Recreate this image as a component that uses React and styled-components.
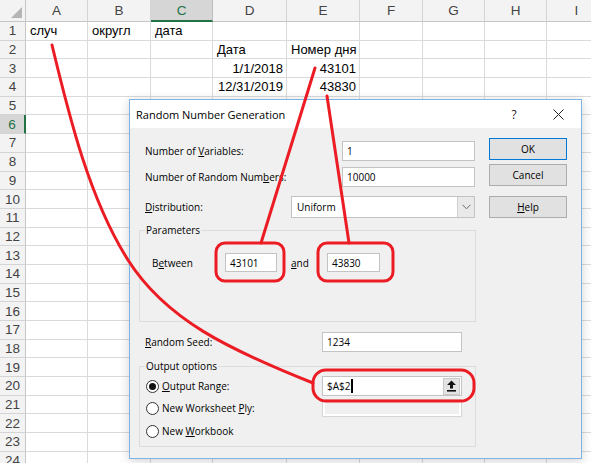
import React from 'react'
import styled, { createGlobalStyle } from 'styled-components'

const GlobalStyle = createGlobalStyle`
html, body {
  margin: 0;
  padding: 0;
  background: #fff;
}
body {
  width: 591px;
  height: 463px;
  overflow: hidden;
}
* {
  box-sizing: border-box;
}
`

const columns = ['A', 'B', 'C', 'D', 'E', 'F', 'G', 'H', 'I']

const cells = {
  1: { A: 'случ', B: 'округл', C: 'дата' },
  2: { D: 'Дата', E: 'Номер дня' },
  3: { D: ['1/1/2018', 'right'], E: ['43101', 'right'] },
  4: { D: ['12/31/2019', 'right'], E: ['43830', 'right'] },
}

const UpArrowIcon = () => (
  <svg width="11" height="12" viewBox="0 0 11 12">
    <path d="M5.5 0.5 L10 5 L7 5 L7 8.5 L4 8.5 L4 5 L1 5 Z" fill="#111" />
    <rect x="1" y="10" width="9" height="1.6" fill="#111" />
  </svg>
)

const ChevronIcon = () => (
  <svg width="9" height="6" viewBox="0 0 9 6">
    <path d="M0.5 0.8 L4.5 4.8 L8.5 0.8" fill="none" stroke="#6b6b6b" strokeWidth="1" />
  </svg>
)

const CloseIcon = () => (
  <svg width="11" height="11" viewBox="0 0 11 11">
    <path d="M0.5 0.5 L10.5 10.5 M10.5 0.5 L0.5 10.5" stroke="#222" strokeWidth="1" />
  </svg>
)

const Annotations = () => (
  <Overlay width="591" height="463" viewBox="0 0 591 463">
    <g fill="none" stroke="#ec1c24" strokeWidth="3" strokeLinecap="round">
      <path d="M52 45 C70 120 90 200 128 260 S230 350 313 383" />
      <path d="M315 68 L261 243" />
      <path d="M327 96 L349 243" />
      <rect x="216" y="243" width="68" height="38" rx="9" />
      <rect x="318" y="243" width="75" height="38" rx="9" />
      <rect x="313" y="370" width="161" height="31" rx="13" />
    </g>
  </Overlay>
)

const App = () => {
  const rows = Array.from({ length: 25 }, (_, i) => i + 1)
  return (
    <Screen>
      <GlobalStyle />
      <Sheet>
        <Corner>
          <CornerMark />
        </Corner>
        {columns.map((c) => (
          <ColHead key={c} selected={c === 'C'}>{c}</ColHead>
        ))}
        {rows.map((r) => (
          <React.Fragment key={r}>
            <RowHead selected={r === 6}>{r}</RowHead>
            {columns.map((c) => {
              const v = cells[r] && cells[r][c]
              const text = Array.isArray(v) ? v[0] : v
              const align = Array.isArray(v) ? v[1] : 'left'
              return <Cell key={c} align={align}>{text}</Cell>
            })}
          </React.Fragment>
        ))}
      </Sheet>

      <Dialog>
        <TitleBar>
          <Title>Random Number Generation</Title>
          <TitleHelp>?</TitleHelp>
          <TitleClose><CloseIcon /></TitleClose>
        </TitleBar>
        <Body>
          <Form>
            <FieldRow top={13}>
              <Label width={197}>Number of <u>V</u>ariables:</Label>
              <TextBox width={133}>1</TextBox>
            </FieldRow>
            <FieldRow top={6}>
              <Label width={197}>Number of Random Num<u>b</u>ers:</Label>
              <TextBox width={133}>10000</TextBox>
            </FieldRow>
            <FieldRow top={9} height={22}>
              <Label width={146}><u>D</u>istribution:</Label>
              <Select>
                <SelectValue>Uniform</SelectValue>
                <SelectButton><ChevronIcon /></SelectButton>
              </Select>
            </FieldRow>

            <GroupBox top={4} height={100}>
              <Legend>Parameters</Legend>
              <BetweenRow>
                <Label width={73}>B<u>e</u>tween</Label>
                <TextBox width={52}>43101</TextBox>
                <AndLabel><u>a</u>nd</AndLabel>
                <TextBox width={53}>43830</TextBox>
              </BetweenRow>
            </GroupBox>

            <FieldRow top={10}>
              <Label width={177}><u>R</u>andom Seed:</Label>
              <TextBox width={140}>1234</TextBox>
            </FieldRow>

            <GroupBox top={6} height={89}>
              <Legend>Output options</Legend>
              <OptionRow top={2} height={20}>
                <OptionLabel>
                  <Radio checked />
                  <span><u>O</u>utput Range:</span>
                </OptionLabel>
                <TextBox width={140}>
                  <RangeText>$A$2<Caret /></RangeText>
                  <RefButton><UpArrowIcon /></RefButton>
                </TextBox>
              </OptionRow>
              <OptionRow top={3} height={18}>
                <OptionLabel>
                  <Radio />
                  <span>New Worksheet <u>P</u>ly:</span>
                </OptionLabel>
                <DisabledBox />
              </OptionRow>
              <OptionRow top={4} height={20}>
                <OptionLabel>
                  <Radio />
                  <span>New <u>W</u>orkbook</span>
                </OptionLabel>
              </OptionRow>
            </GroupBox>
          </Form>

          <Buttons>
            <Button top={10} primary>OK</Button>
            <Button top={4}>Cancel</Button>
            <Button top={10}><u>H</u>elp</Button>
          </Buttons>
        </Body>
      </Dialog>

      <Annotations />
    </Screen>
  )
}

const Screen = styled.div`
position: relative;
width: 591px;
height: 463px;
overflow: hidden;
background: #fff;
`
const Sheet = styled.div`
display: grid;
grid-template-columns: 26px 62px 63px 62px 74px 73px 63px 62px 62px 60px;
grid-template-rows: 22px repeat(25, 18.7px);
font-family: "Liberation Sans", Arial, sans-serif;
font-size: 13px;
color: #000;
`
const Corner = styled.div`
position: relative;
background: #f3f3f3;
border-right: 1px solid #c6c6c6;
border-bottom: 1px solid #c6c6c6;
`
const CornerMark = styled.div`
position: absolute;
right: 3px;
bottom: 3px;
width: 0;
height: 0;
border-left: 11px solid transparent;
border-bottom: 11px solid #b5b5b5;
`
const ColHead = styled.div`
display: flex;
align-items: center;
justify-content: center;
background: ${(p) => (p.selected ? '#d6d6d6' : '#f3f3f3')};
color: ${(p) => (p.selected ? '#217346' : '#444')};
border-right: 1px solid ${(p) => (p.selected ? '#bdbdbd' : '#d4d4d4')};
border-bottom: ${(p) => (p.selected ? '2px solid #217346' : '1px solid #c6c6c6')};
font-size: 13.5px;
`
const RowHead = styled.div`
display: flex;
align-items: center;
justify-content: center;
background: ${(p) => (p.selected ? '#d6d6d6' : '#f3f3f3')};
color: ${(p) => (p.selected ? '#217346' : '#444')};
border-right: ${(p) => (p.selected ? '2px solid #217346' : '1px solid #c6c6c6')};
border-bottom: 1px solid #d4d4d4;
font-size: 13.5px;
`
const Cell = styled.div`
display: flex;
align-items: center;
justify-content: ${(p) => (p.align === 'right' ? 'flex-end' : 'flex-start')};
padding: 0 3px 0 4px;
white-space: nowrap;
border-right: 1px solid #dadada;
border-bottom: 1px solid #dadada;
`

const Dialog = styled.div`
position: absolute;
left: 129px;
top: 99px;
width: 453px;
height: 360px;
display: flex;
flex-direction: column;
background: #f0f0f0;
border: 1px solid #7fb3e6;
box-shadow: 0 2px 10px rgba(0, 0, 0, 0.18);
font-family: "Open Sans", "Noto Sans", sans-serif;
font-size: 10px;
color: #000;
`
const TitleBar = styled.div`
height: 28px;
display: flex;
align-items: center;
padding-left: 6px;
padding-right: 1px;
background: #fff;
`
const Title = styled.div`
flex: 1;
font-size: 11px;
`
const TitleHelp = styled.div`
width: 30px;
text-align: center;
font-size: 12px;
color: #222;
`
const TitleClose = styled.div`
width: 44px;
margin-left: 7px;
display: flex;
justify-content: center;
`
const Body = styled.div`
flex: 1;
display: flex;
padding-left: 9px;
`
const Form = styled.div`
width: 337px;
display: flex;
flex-direction: column;
`
const FieldRow = styled.div`
display: flex;
align-items: center;
margin-top: ${(p) => p.top}px;
height: ${(p) => p.height || 20}px;
padding-left: 6px;
`
const Label = styled.div`
width: ${(p) => p.width}px;
flex-shrink: 0;
white-space: nowrap;
`
const TextBox = styled.div`
width: ${(p) => p.width}px;
height: 100%;
display: flex;
align-items: center;
justify-content: space-between;
padding-left: 4px;
background: #fff;
border: 1px solid #c3c3c3;
white-space: nowrap;
`
const Select = styled.div`
width: 184px;
height: 100%;
display: flex;
background: #fff;
border: 1px solid #c3c3c3;
`
const SelectValue = styled.div`
flex: 1;
display: flex;
align-items: center;
padding-left: 5px;
`
const SelectButton = styled.div`
width: 17px;
display: flex;
align-items: center;
justify-content: center;
background: #e9e9e9;
border-left: 1px solid #d0d0d0;
`
const GroupBox = styled.fieldset`
margin: ${(p) => p.top}px 0 0 0;
padding: 0 6px;
height: ${(p) => p.height}px;
border: 1px solid #dcdcdc;
min-width: 0;
`
const Legend = styled.legend`
padding: 0 1px;
margin-left: -1px;
line-height: 16px;
font-size: 10px;
`
const BetweenRow = styled.div`
display: flex;
align-items: center;
height: 19px;
margin-top: 15px;
padding-left: 6px;
`
const AndLabel = styled.div`
width: 50px;
padding-left: 14px;
`
const OptionRow = styled.div`
display: flex;
align-items: center;
margin-top: ${(p) => p.top}px;
height: ${(p) => p.height}px;
`
const OptionLabel = styled.div`
width: 176px;
display: flex;
align-items: center;
white-space: nowrap;
`
const Radio = styled.span`
width: 13px;
height: 13px;
margin-right: 3px;
border-radius: 50%;
border: 1px solid #333;
background: #fff;
display: flex;
align-items: center;
justify-content: center;
&::after {
  content: '';
  width: 7px;
  height: 7px;
  border-radius: 50%;
  background: ${(p) => (p.checked ? '#111' : 'transparent')};
}
`
const RangeText = styled.span`
display: flex;
align-items: center;
`
const Caret = styled.span`
width: 1.5px;
height: 14px;
margin-left: 1px;
background: #000;
`
const RefButton = styled.div`
width: 17px;
height: 17px;
margin-right: 1px;
display: flex;
align-items: center;
justify-content: center;
background: #e3e3e3;
border: 1px solid #c9c9c9;
`
const DisabledBox = styled.div`
width: 140px;
height: 100%;
background: #f0f0f0;
border: 1px solid #d6d6d6;
box-shadow: inset 0 0 0 2px #fff;
`
const Buttons = styled.div`
width: 78px;
margin-left: 13px;
display: flex;
flex-direction: column;
`
const Button = styled.div`
height: 22px;
margin-top: ${(p) => p.top}px;
display: flex;
align-items: center;
justify-content: center;
background: #e1e1e1;
border: 1px solid ${(p) => (p.primary ? '#0078d7' : '#adadad')};
`
const Overlay = styled.svg`
position: absolute;
left: 0;
top: 0;
pointer-events: none;
`

export default App
